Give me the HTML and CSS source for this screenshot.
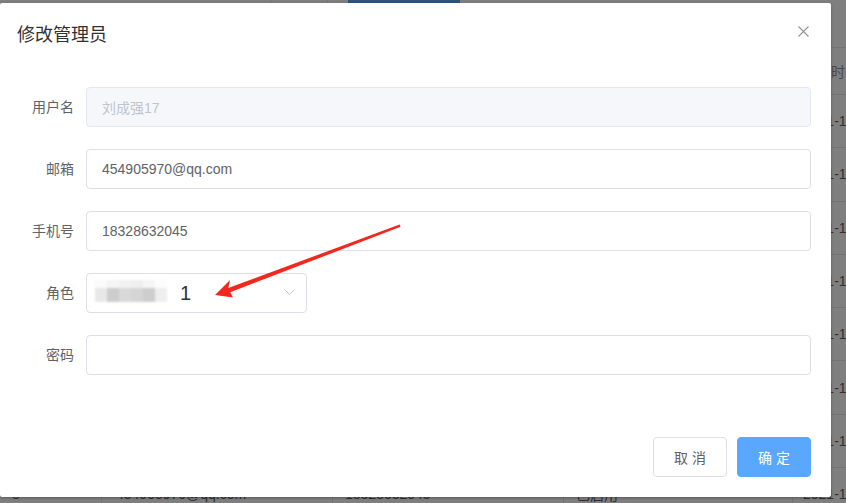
FILE: index.html
```html
<!DOCTYPE html>
<html lang="zh-CN">
<head>
    <meta charset="UTF-8">
    <meta name="viewport" content="width=device-width, initial-scale=1.0">
    <title>修改管理员</title>
    <link rel="stylesheet" href="styles.css">
</head>
<body>
    <!-- 背后的管理员列表页 -->
    <div class="page">
        <div class="toolbar">
            <span class="tool-box"></span>
            <span class="tool-box tool-box-small"></span>
            <span class="tool-button"></span>
        </div>
        <div class="table">
            <div class="table-row table-head">
                <div class="cell col-0"></div>
                <div class="cell col-1">邮箱</div>
                <div class="cell col-2">手机号</div>
                <div class="cell col-3">状态</div>
                <div class="cell col-4">创建时间</div>
            </div>
            <div class="table-row">
                <div class="cell col-0">1</div>
                <div class="cell col-1">admin@qq.com</div>
                <div class="cell col-2">13800000001</div>
                <div class="cell col-3">已启用</div>
                <div class="cell col-4">2021-11-20</div>
            </div>
            <div class="table-row">
                <div class="cell col-0">2</div>
                <div class="cell col-1">test01@qq.com</div>
                <div class="cell col-2">13800000002</div>
                <div class="cell col-3">已启用</div>
                <div class="cell col-4">2021-11-20</div>
            </div>
            <div class="table-row">
                <div class="cell col-0">3</div>
                <div class="cell col-1">test02@qq.com</div>
                <div class="cell col-2">13800000003</div>
                <div class="cell col-3">已启用</div>
                <div class="cell col-4">2021-11-21</div>
            </div>
            <div class="table-row">
                <div class="cell col-0">4</div>
                <div class="cell col-1">test03@qq.com</div>
                <div class="cell col-2">13800000004</div>
                <div class="cell col-3">已启用</div>
                <div class="cell col-4">2021-11-21</div>
            </div>
            <div class="table-row">
                <div class="cell col-0">5</div>
                <div class="cell col-1">test04@qq.com</div>
                <div class="cell col-2">13800000005</div>
                <div class="cell col-3">已启用</div>
                <div class="cell col-4">2021-11-22</div>
            </div>
            <div class="table-row">
                <div class="cell col-0">6</div>
                <div class="cell col-1">test05@qq.com</div>
                <div class="cell col-2">13800000006</div>
                <div class="cell col-3">已启用</div>
                <div class="cell col-4">2021-11-23</div>
            </div>
            <div class="table-row">
                <div class="cell col-0">7</div>
                <div class="cell col-1">test06@qq.com</div>
                <div class="cell col-2">13800000007</div>
                <div class="cell col-3">已启用</div>
                <div class="cell col-4">2021-11-23</div>
            </div>
            <div class="table-row">
                <div class="cell col-0">8</div>
                <div class="cell col-1">454905970@qq.com</div>
                <div class="cell col-2">18328632045</div>
                <div class="cell col-3">已启用</div>
                <div class="cell col-4">2021-11-24</div>
            </div>
        </div>
    </div>

    <div class="mask"></div>

    <!-- 修改管理员弹窗 -->
    <div class="dialog">
        <div class="dialog-header">
            <span class="dialog-title">修改管理员</span>
            <button class="dialog-close" type="button">
                <svg width="11" height="11" viewBox="0 0 11 11">
                    <path d="M0.5 0.5 L10.5 10.5 M10.5 0.5 L0.5 10.5" stroke="#909399" stroke-width="1.1" fill="none"/>
                </svg>
            </button>
        </div>

        <div class="dialog-body">
            <form class="form">
                <div class="form-item">
                    <label class="form-label">用户名</label>
                    <input class="input" type="text" value="刘成强17" disabled>
                </div>
                <div class="form-item">
                    <label class="form-label">邮箱</label>
                    <input class="input" type="text" value="454905970@qq.com">
                </div>
                <div class="form-item">
                    <label class="form-label">手机号</label>
                    <input class="input" type="text" value="18328632045">
                </div>
                <div class="form-item">
                    <label class="form-label">角色</label>
                    <div class="select">
                        <span class="blur-text">
                            <i></i><i></i><i></i><i></i><i></i><i></i>
                            <i></i><i></i><i></i><i></i><i></i><i></i>
                        </span>
                        <span class="select-value">1</span>
                        <svg class="select-arrow" width="11" height="6" viewBox="0 0 11 6">
                            <polyline points="0.5,0.5 5.5,5.5 10.5,0.5" stroke="#c0c4cc" stroke-width="1" fill="none"/>
                        </svg>
                    </div>
                </div>
                <div class="form-item">
                    <label class="form-label">密码</label>
                    <input class="input" type="password" value="">
                </div>
            </form>
        </div>

        <div class="dialog-footer">
            <button class="btn" type="button">取消</button>
            <button class="btn btn-primary" type="button">确定</button>
        </div>

        <!-- 截图上的红色标注箭头 -->
        <svg class="note-arrow" width="831" height="494" viewBox="0 0 831 494">
            <polygon points="215,292 230,277 228.3,285 399.6,221.6 400.6,223.8 230.2,289.2 233,294.5" fill="#f4271f"/>
        </svg>
    </div>
</body>
</html>
```

FILE: styles.css
```css
/* 基础 */
body {
    margin: 0;
    width: 846px;
    height: 503px;
    overflow: hidden;
    position: relative;
    font-family: "Liberation Sans", "Noto Sans CJK SC", sans-serif;
    font-size: 14px;
    background-color: #ffffff;
}

/* 背后的列表页 */
.page {
    width: 846px;
}

.toolbar {
    display: flex;
    height: 47px;
    align-items: flex-start;
}

.tool-box {
    width: 270px;
    height: 40px;
    border-right: 1px solid #e8e8e8;
}

.tool-box-small {
    width: 20px;
    margin-left: 56px;
    border-right: none;
    border-left: 1px solid #e8e8e8;
}

.tool-button {
    width: 112px;
    height: 40px;
    background-color: #58a4ff;
}

.table {
    border-top: 1px solid #e8e8e8;
}

.table-row {
    display: flex;
    height: 53.3px;
    box-sizing: border-box;
    border-bottom: 1px solid #e8e8e8;
    color: #606266;
}

.table-head {
    height: 47px;
    color: #909399;
}

.cell {
    display: flex;
    align-items: center;
    padding: 0 12px;
    box-sizing: border-box;
    white-space: nowrap;
    overflow: hidden;
    border-right: 1px solid #e8e8e8;
}

.col-0 { width: 102px; }
.col-1 { width: 231px; padding-left: 14px; }
.col-2 { width: 231px; }
.col-3 { width: 229px; }
.col-4 { flex: 1; padding-left: 10px; border-right: none; }

.mask {
    position: absolute;
    top: 0;
    left: 0;
    right: 0;
    bottom: 0;
    background-color: rgba(0, 0, 0, 0.5);
}

/* 弹窗 */
.dialog {
    position: absolute;
    top: 3px;
    left: 0;
    width: 831px;
    height: 494px;
    background-color: #ffffff;
    border-radius: 2px;
    box-shadow: 0 1px 3px rgba(0, 0, 0, 0.3);
    display: flex;
    flex-direction: column;
}

.dialog-header {
    display: flex;
    justify-content: space-between;
    padding: 20px 22px 10px 17px;
}

.dialog-title {
    font-size: 18px;
    line-height: 24px;
    color: #303133;
}

.dialog-close {
    margin-top: 3px;
    padding: 0;
    border: none;
    background: transparent;
    width: 11px;
    height: 11px;
    display: flex;
    cursor: pointer;
}

.dialog-body {
    padding: 30px 20px 30px 16px;
}

.form-item {
    display: flex;
    margin-bottom: 22px;
}

.form-label {
    width: 70px;
    padding-right: 12px;
    box-sizing: border-box;
    text-align: right;
    line-height: 40px;
    color: #606266;
}

.input {
    flex: 1;
    height: 40px;
    box-sizing: border-box;
    padding: 0 15px;
    border: 1px solid #dcdfe6;
    border-radius: 4px;
    font-family: inherit;
    font-size: 14px;
    color: #606266;
    outline: none;
    background-color: #ffffff;
}

.input:disabled {
    background-color: #f5f7fa;
    border-color: #e4e7ed;
    color: #c0c4cc;
    -webkit-text-fill-color: #c0c4cc;
}

/* 角色下拉框 */
.select {
    width: 221px;
    height: 40px;
    box-sizing: border-box;
    border: 1px solid #dcdfe6;
    border-radius: 4px;
    display: flex;
    align-items: center;
    padding-left: 8px;
}

.blur-text {
    display: grid;
    grid-template-columns: repeat(6, 12px);
    grid-template-rows: 8px 14px;
    margin-top: -4px;
    filter: blur(1.2px);
}

.blur-text i:nth-child(1) { background-color: #fbfbfb; }
.blur-text i:nth-child(2) { background-color: #f5f5f5; }
.blur-text i:nth-child(3) { background-color: #f2f2f2; }
.blur-text i:nth-child(4) { background-color: #efefef; }
.blur-text i:nth-child(5) { background-color: #f6f6f6; }
.blur-text i:nth-child(6) { background-color: #fdfdfd; }
.blur-text i:nth-child(7) { background-color: #e8e8e8; }
.blur-text i:nth-child(8) { background-color: #cdcdcd; }
.blur-text i:nth-child(9) { background-color: #d9d9d9; }
.blur-text i:nth-child(10) { background-color: #d5d5d5; }
.blur-text i:nth-child(11) { background-color: #cdcdcd; }
.blur-text i:nth-child(12) { background-color: #eeeeee; }

.select-value {
    margin-left: 13px;
    font-size: 20px;
    color: #303133;
}

.select-arrow {
    margin-left: auto;
    margin-right: 11px;
    margin-top: -2px;
}

/* 底部按钮 */
.dialog-footer {
    display: flex;
    justify-content: flex-end;
    gap: 10px;
    padding: 10px 20px 20px;
}

.btn {
    width: 74px;
    height: 40px;
    padding: 0 0 0 4px;
    box-sizing: border-box;
    border: 1px solid #dcdfe6;
    border-radius: 4px;
    background-color: #ffffff;
    color: #606266;
    font-family: inherit;
    font-size: 14px;
    letter-spacing: 4px;
    cursor: pointer;
}

.btn-primary {
    background-color: #59a7ff;
    border-color: #59a7ff;
    color: #ffffff;
}

.note-arrow {
    position: absolute;
    top: 0;
    left: 0;
    pointer-events: none;
}
```
